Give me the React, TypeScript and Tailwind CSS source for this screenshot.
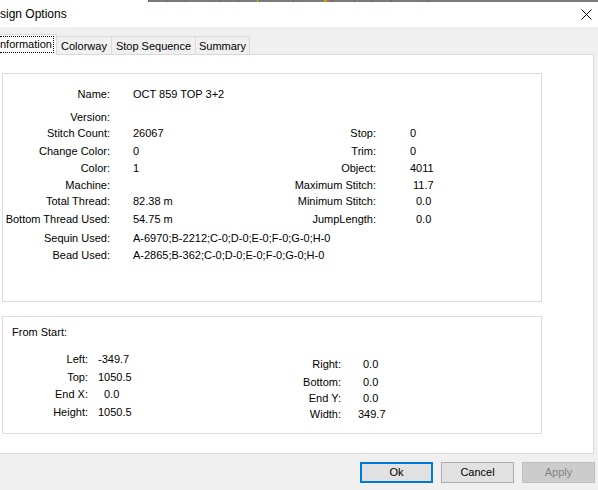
import React from 'react';

type Row = {
  label: string;
  value: string;
  h: string;
  right?: { label: string; value: string; pad: string };
};

const infoRows: Row[] = [
  { label: 'Name:', value: 'OCT 859 TOP 3+2', h: 'h-[23px]' },
  { label: 'Version:', value: '', h: 'h-[16px]' },
  { label: 'Stitch Count:', value: '26067', h: 'h-[18px]', right: { label: 'Stop:', value: '0', pad: 'pl-[34px]' } },
  { label: 'Change Color:', value: '0', h: 'h-[17px]', right: { label: 'Trim:', value: '0', pad: 'pl-[34px]' } },
  { label: 'Color:', value: '1', h: 'h-[17px]', right: { label: 'Object:', value: '4011', pad: 'pl-[34px]' } },
  { label: 'Machine:', value: '', h: 'h-[16px]', right: { label: 'Maximum Stitch:', value: '11.7', pad: 'pl-[37px]' } },
  { label: 'Total Thread:', value: '82.38 m', h: 'h-[18px]', right: { label: 'Minimum Stitch:', value: '0.0', pad: 'pl-[40px]' } },
  { label: 'Bottom Thread Used:', value: '54.75 m', h: 'h-[19px]', right: { label: 'JumpLength:', value: '0.0', pad: 'pl-[40px]' } },
  { label: 'Sequin Used:', value: 'A-6970;B-2212;C-0;D-0;E-0;F-0;G-0;H-0', h: 'h-[17px]' },
  { label: 'Bead Used:', value: 'A-2865;B-362;C-0;D-0;E-0;F-0;G-0;H-0', h: 'h-[17px]' },
];

const startLeft = [
  { label: 'Left:', value: '-349.7', h: 'h-[18px]', pad: 'pl-[10px]' },
  { label: 'Top:', value: '1050.5', h: 'h-[17px]', pad: 'pl-[10px]' },
  { label: 'End X:', value: '0.0', h: 'h-[18px]', pad: 'pl-[16px]' },
  { label: 'Height:', value: '1050.5', h: 'h-[17px]', pad: 'pl-[10px]' },
];

const startRight = [
  { label: 'Right:', value: '0.0', h: 'h-[18px]', pad: 'pl-[22px]' },
  { label: 'Bottom:', value: '0.0', h: 'h-[16px]', pad: 'pl-[22px]' },
  { label: 'End Y:', value: '0.0', h: 'h-[16px]', pad: 'pl-[22px]' },
  { label: 'Width:', value: '349.7', h: 'h-[17px]', pad: 'pl-[17px]' },
];

const App: React.FC = () => {
  return (
    <div className="w-[598px] h-[490px] overflow-hidden bg-[#f0f0f0] text-[11px] leading-[17px] text-black font-['Liberation_Sans',Arial,sans-serif]">
      {/* window edge behind */}
      <div className="flex h-[2px]">
        <div className="w-[148px] bg-white" />
        <div className="flex-1 bg-[#7a7a7a] flex">
          <div className="ml-[0px] w-px bg-[#2e8b2e]" />
          <div className="ml-[17px] w-px bg-[#2e8b2e]" />
          <div className="ml-[18px] w-px bg-[#2e8b2e]" />
          <div className="ml-[34px] w-px bg-[#2e8b2e]" />
          <div className="ml-[17px] w-px bg-[#2e8b2e]" />
          <div className="ml-[18px] w-px bg-[#c8c800]" />
          <div className="ml-[35px] w-px bg-[#2e8b2e]" />
          <div className="ml-[30px] w-[3px] bg-[#c8a000]" />
          <div className="ml-[4px] w-px bg-[#c03030]" />
          <div className="ml-[22px] w-px bg-[#2e8b2e]" />
          <div className="ml-[17px] w-px bg-[#2e8b2e]" />
          <div className="ml-[18px] w-px bg-[#2e8b2e]" />
          <div className="ml-[35px] w-px bg-[#2e8b2e]" />
        </div>
      </div>

      {/* title bar */}
      <div className="h-[25px] bg-white flex items-center justify-between">
        <span className="text-[12px]">sign Options</span>
        <svg width="11" height="11" viewBox="0 0 11 11" className="mr-[6px]">
          <path d="M0.5 0.5 L10.5 10.5 M10.5 0.5 L0.5 10.5" stroke="#000" strokeWidth="1" />
        </svg>
      </div>

      {/* tabs */}
      <div className="mt-[7px] flex items-end h-[20px]">
        <div className="relative z-10 w-[57px] h-[21px] -mb-px bg-white border border-l-0 border-b-0 border-[#d9d9d9] pr-[2px] pt-[1px]">
          <div className="border border-l-0 border-dotted border-black leading-[15px] whitespace-nowrap">nformation</div>
        </div>
        <div className="h-[18px] w-[55px] border border-l-0 border-b-0 border-[#d9d9d9] text-center leading-[18px]">Colorway</div>
        <div className="h-[18px] w-[84px] border border-l-0 border-b-0 border-[#d9d9d9] text-center leading-[18px]">Stop Sequence</div>
        <div className="h-[18px] w-[54px] border border-l-0 border-b-0 border-[#d9d9d9] text-center leading-[18px]">Summary</div>
      </div>

      {/* tab page */}
      <div className="-ml-[2px] w-[596px] h-[400px] bg-white border border-[#d9d9d9] pt-[18px] pl-[3px]">
        <div className="w-[540px] h-[229px] border border-[#dcdcdc] pt-[12px]">
          {infoRows.map((r) => (
            <div key={r.label} className={`flex ${r.h}`}>
              <div className="w-[107px] text-right shrink-0">{r.label}</div>
              <div className="w-[127px] pl-[23px] shrink-0 whitespace-nowrap">{r.value}</div>
              {r.right && (
                <>
                  <div className="w-[139px] text-right shrink-0">{r.right.label}</div>
                  <div className={r.right.pad}>{r.right.value}</div>
                </>
              )}
            </div>
          ))}
        </div>

        <div className="mt-[14px] w-[540px] h-[118px] border border-[#dcdcdc] pt-[7px]">
          <div className="pl-[9px]">From Start:</div>
          <div className="flex">
            <div className="mt-[10px] w-[250px]">
              {startLeft.map((r) => (
                <div key={r.label} className={`flex ${r.h}`}>
                  <div className="w-[85px] text-right">{r.label}</div>
                  <div className={r.pad}>{r.value}</div>
                </div>
              ))}
            </div>
            <div className="mt-[15px]">
              {startRight.map((r) => (
                <div key={r.label} className={`flex ${r.h}`}>
                  <div className="w-[88px] text-right">{r.label}</div>
                  <div className={r.pad}>{r.value}</div>
                </div>
              ))}
            </div>
          </div>
        </div>
      </div>

      {/* buttons */}
      <div className="mt-[8px] flex justify-end gap-[8px] pr-[3px]">
        <button className="w-[73px] h-[21px] bg-[#e1e1e1] border-2 border-[#0078d7] text-[11px] leading-none">Ok</button>
        <button className="w-[73px] h-[21px] bg-[#e1e1e1] border border-[#adadad] text-[11px] leading-none">Cancel</button>
        <button className="w-[73px] h-[21px] bg-[#cccccc] border border-[#bfbfbf] text-[#838383] text-[11px] leading-none">Apply</button>
      </div>
    </div>
  );
};

export default App;
